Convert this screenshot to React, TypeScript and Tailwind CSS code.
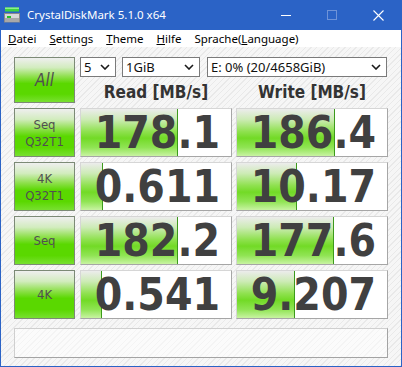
import React from 'react'

const uiFont = { fontFamily: '"Noto Sans", "Open Sans", sans-serif' }
const numFont = { fontFamily: '"DejaVu Sans Condensed", "DejaVu Sans", sans-serif' }

const rows = [
  { label: ['Seq', 'Q32T1'], read: '178.1', readBar: 97, write: '186.4', writeBar: 98 },
  { label: ['4K', 'Q32T1'], read: '0.611', readBar: 22, write: '10.17', writeBar: 60 },
  { label: ['Seq'], read: '182.2', readBar: 97, write: '177.6', writeBar: 97 },
  { label: ['4K'], read: '0.541', readBar: 21, write: '9.207', writeBar: 58 },
]

const btnClass =
  'border border-[#7c8a76] bg-[linear-gradient(to_bottom,#efefef_0%,#d2ecbe_22%,#8fe04e_42%,#5ad800_58%,#5ad800_82%,#78e030_100%)] flex flex-col items-center justify-center text-[#505050]'

function Chevron() {
  return (
    <svg width="10" height="6" viewBox="0 0 10 6" className="shrink-0">
      <path d="M1 1 L5 5 L9 1" fill="none" stroke="#1a1a1a" strokeWidth="1.6" />
    </svg>
  )
}

function Select({ width, text }: { width: string; text: string }) {
  return (
    <div
      className={`${width} h-[20px] bg-white border border-[#7a7a7a] flex items-center justify-between pl-[3px] pr-[5px] text-[13px] text-[#111]`}
      style={uiFont}
    >
      <span className="leading-none">{text}</span>
      <Chevron />
    </div>
  )
}

function Value({ value, bar }: { value: string; bar: number }) {
  return (
    <div className="relative w-[152px] h-full bg-white border border-t-[#d6d6d6] border-l-[#d6d6d6] border-r-[#a6a6a6] border-b-[#a6a6a6] overflow-hidden">
      <div
        className="absolute left-0 top-0 bottom-0 border-r border-[#3c9a1c] bg-[linear-gradient(to_bottom,#ececec_0%,#cdebb6_22%,#8fe14f_48%,#72da26_62%,#90e454_82%,#c8f3a2_100%)]"
        style={{ width: bar }}
      />
      <div
        className="relative h-full flex items-center justify-end pr-[11px] text-[44px] font-bold text-[#404040] leading-none"
        style={numFont}
      >
        {value}
      </div>
    </div>
  )
}

export default function App() {
  return (
    <div className="w-[402px] h-[367px] bg-[#2b63c6] flex flex-col px-[1px] pb-[1px] overflow-hidden">
      {/* title bar */}
      <div className="h-[30px] flex items-center text-white" style={uiFont}>
        <svg width="16" height="16" viewBox="0 0 16 16" className="ml-[3px] mr-[7px]">
          <rect x="1" y="0.5" width="14" height="4" fill="#3ed43e" />
          <rect x="1" y="0.5" width="14" height="1.5" fill="#8cf08c" />
          <rect x="0.5" y="6.5" width="15" height="8.5" fill="#d8d8d8" stroke="#8a8a8a" />
          <rect x="1" y="11" width="14" height="4" fill="#a8a8a8" />
          <rect x="3" y="9" width="4" height="2" fill="#26c026" />
        </svg>
        <span className="text-[11.5px] leading-none">CrystalDiskMark 5.1.0 x64</span>
        <div className="ml-auto flex items-center h-full">
          <div className="w-[46px] h-full flex items-center justify-center">
            <div className="w-[10px] h-[1px] bg-white" />
          </div>
          <div className="w-[46px] h-full flex items-center justify-center">
            <div className="w-[10px] h-[10px] border border-[#6f93d8]" />
          </div>
          <div className="w-[46px] h-full flex items-center justify-center">
            <svg width="11" height="11" viewBox="0 0 11 11">
              <path d="M0.5 0.5 L10.5 10.5 M10.5 0.5 L0.5 10.5" stroke="white" strokeWidth="1.1" />
            </svg>
          </div>
        </div>
      </div>

      {/* menu bar */}
      <div className="h-[17px] bg-white flex items-center pl-[7px] gap-[13px] text-[11.5px] text-black" style={uiFont}>
        <span><u>D</u>atei</span>
        <span><u>S</u>ettings</span>
        <span><u>T</u>heme</span>
        <span><u>H</u>ilfe</span>
        <span>Sprache(<u>L</u>anguage)</span>
      </div>

      {/* body */}
      <div className="flex-1 flex flex-col px-[13px] pt-[10px] bg-[repeating-linear-gradient(135deg,#f6f6f6_0px,#f6f6f6_3px,#e9e9e9_3px,#e9e9e9_4px)]">
        <div className="flex gap-[5px] h-[46px]">
          <div className={`${btnClass} w-[61px] h-[46px]`}>
            <span className="text-[17px] italic leading-none" style={numFont}>All</span>
          </div>
          <div className="flex flex-col">
            <div className="flex">
              <Select width="w-[36px]" text="5" />
              <div className="w-[6px]" />
              <Select width="w-[78px]" text="1GiB" />
              <div className="w-[7px]" />
              <Select width="w-[180px]" text="E: 0% (20/4658GiB)" />
            </div>
            <div className="flex gap-[4px] pt-[7px] text-[17px] font-bold text-[#333] leading-none" style={numFont}>
              <div className="w-[152px] text-center">Read [MB/s]</div>
              <div className="w-[152px] text-center">Write [MB/s]</div>
            </div>
          </div>
        </div>

        <div className="flex flex-col gap-[5px] mt-[5px]">
          {rows.map((r, i) => (
            <div key={i} className="flex h-[49px]">
              <div className={`${btnClass} w-[61px] h-full mr-[5px] text-[13px] leading-[17px]`} style={numFont}>
                {r.label.map((l) => (
                  <span key={l}>{l}</span>
                ))}
              </div>
              <Value value={r.read} bar={r.readBar} />
              <div className="w-[4px]" />
              <Value value={r.write} bar={r.writeBar} />
            </div>
          ))}
        </div>

        <div className="mt-[9px] h-[30px] w-[374px] bg-white/50 border border-t-[#cfcfcf] border-l-[#cfcfcf] border-r-[#a3a3a3] border-b-[#a3a3a3]" />
      </div>
    </div>
  )
}
